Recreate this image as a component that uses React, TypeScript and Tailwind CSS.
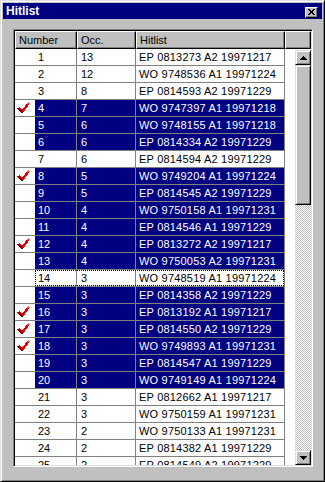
const ROWS: [number, number, string][] = [
  [1, 13, "EP 0813273 A2 19971217"],
  [2, 12, "WO 9748536 A1 19971224"],
  [3, 8, "EP 0814593 A2 19971229"],
  [4, 7, "WO 9747397 A1 19971218"],
  [5, 6, "WO 9748155 A1 19971218"],
  [6, 6, "EP 0814334 A2 19971229"],
  [7, 6, "EP 0814594 A2 19971229"],
  [8, 5, "WO 9749204 A1 19971224"],
  [9, 5, "EP 0814545 A2 19971229"],
  [10, 4, "WO 9750158 A1 19971231"],
  [11, 4, "EP 0814546 A1 19971229"],
  [12, 4, "EP 0813272 A2 19971217"],
  [13, 4, "WO 9750053 A2 19971231"],
  [14, 3, "WO 9748519 A1 19971224"],
  [15, 3, "EP 0814358 A2 19971229"],
  [16, 3, "EP 0813192 A1 19971217"],
  [17, 3, "EP 0814550 A2 19971229"],
  [18, 3, "WO 9749893 A1 19971231"],
  [19, 3, "EP 0814547 A1 19971229"],
  [20, 3, "WO 9749149 A1 19971224"],
  [21, 3, "EP 0812662 A1 19971217"],
  [22, 3, "WO 9750159 A1 19971231"],
  [23, 2, "WO 9750133 A1 19971231"],
  [24, 2, "EP 0814382 A1 19971229"],
  [25, 2, "EP 0814549 A2 19971229"],
];

const SELECTED = new Set([4, 5, 6, 8, 9, 10, 11, 12, 13, 15, 16, 17, 18, 19, 20]);
const CHECKED = new Set([4, 8, 12, 16, 17, 18]);
const FOCUSED = 14;

function Tick() {
  return (
    <svg width="13" height="12" viewBox="0 0 13 12" shapeRendering="crispEdges">
      <polygon points="0,6 3,5 5,8 11,0 13,1 6,11 4,11" fill="#e00000" />
      <polygon points="0,6 2,6 5,10 6,11 4,11" fill="#800000" />
      <polygon points="11,0 13,1 12,2 10,2" fill="#ff6060" />
    </svg>
  );
}

function Arrow({ down }: { down?: boolean }) {
  return (
    <svg width="7" height="4" viewBox="0 0 7 4" shapeRendering="crispEdges">
      <polygon points={down ? "0,0 7,0 3.5,4" : "3.5,0 7,4 0,4"} fill="#000" />
    </svg>
  );
}

function HeaderCell({ label, w }: { label?: string; w: string }) {
  return (
    <div className={`${w} h-full flex items-center pl-[3px] bg-[#c0c0c0] border border-t-white border-l-white border-r-black border-b-black shadow-[inset_-1px_-1px_#808080] text-black`}>
      {label}
    </div>
  );
}

export default function App() {
  return (
    <div className="w-[325px] h-[482px] flex flex-col bg-[#c0c0c0] border border-t-[#dfdfdf] border-l-[#dfdfdf] border-r-black border-b-black shadow-[inset_1px_1px_#fff,inset_-1px_-1px_#808080] p-[2px] font-[Liberation_Sans,Arial,sans-serif] text-[11px] leading-none overflow-hidden">

      {/* title bar */}
      <div className="h-[16px] shrink-0 flex items-center justify-between bg-[#000080] pl-[3px] pr-[4px]">
        <span className="text-white font-bold text-[12px]">Hitlist</span>
        <div className="w-[13px] h-[11px] mt-[2px] flex items-center justify-center bg-[#c0c0c0] border border-t-white border-l-white border-r-black border-b-black shadow-[inset_-1px_-1px_#808080]">
          <svg width="7" height="6" viewBox="0 0 7 6" shapeRendering="crispEdges">
            <path d="M0 0h2l1.5 2L5 0h2L4.5 3L7 6H5L3.5 4L2 6H0l2.5-3z" fill="#000" />
          </svg>
        </div>
      </div>

      {/* body */}
      <div className="flex-1 min-h-0 flex flex-col pt-[10px] pl-[10px] pb-[12px]">
        <div className="w-[300px] flex-1 min-h-0 flex flex-col bg-white border border-t-[#808080] border-l-[#808080] border-r-white border-b-white shadow-[inset_1px_1px_#000,inset_-1px_-1px_#dfdfdf] p-[1px] overflow-hidden">

          {/* header */}
          <div className="h-[18px] shrink-0 flex">
            <HeaderCell w="w-[62px]" label="Number" />
            <HeaderCell w="w-[59px]" label="Occ." />
            <HeaderCell w="w-[149px]" label="Hitlist" />
            <HeaderCell w="flex-1" />
          </div>

          <div className="flex-1 min-h-0 flex">
            {/* rows */}
            <div className="w-[270px] overflow-hidden">
              {ROWS.map(([n, occ, hit]) => {
                const sel = SELECTED.has(n);
                const cell = sel ? "bg-[#000080] text-white" : "text-black";
                return (
                  <div key={n} className="relative h-[17px] flex border-b border-[#808080]">
                    <div className="w-[62px] flex border-r border-[#808080]">
                      <div className="w-[20px] flex items-center pl-[2px]">
                        {CHECKED.has(n) && <Tick />}
                      </div>
                      <div className={`flex-1 flex items-center pl-[3px] ${cell}`}>{n}</div>
                    </div>
                    <div className={`w-[59px] flex items-center pl-[4px] border-r border-[#808080] ${cell}`}>{occ}</div>
                    <div className={`w-[149px] flex items-center pl-[3px] tracking-[0.2px] border-r border-[#808080] ${cell}`}>{hit}</div>
                    {n === FOCUSED && (
                      <span className="absolute left-[20px] right-[1px] top-0 bottom-0 border border-dotted border-black pointer-events-none" />
                    )}
                  </div>
                );
              })}
            </div>

            <div className="flex-1" />

            {/* scrollbar */}
            <div className="w-[16px] mt-[1px] flex flex-col bg-[repeating-conic-gradient(#c0c0c0_0_25%,#fff_0_50%)] bg-[length:2px_2px]">
              <div className="h-[15px] shrink-0 flex items-center justify-center bg-[#c0c0c0] border border-t-[#dfdfdf] border-l-[#dfdfdf] border-r-black border-b-black shadow-[inset_1px_1px_#fff,inset_-1px_-1px_#808080]">
                <Arrow />
              </div>
              <div className="h-[140px] shrink-0 bg-[#c0c0c0] border border-t-[#dfdfdf] border-l-[#dfdfdf] border-r-black border-b-black shadow-[inset_1px_1px_#fff,inset_-1px_-1px_#808080]" />
              <div className="flex-1" />
              <div className="h-[15px] shrink-0 flex items-center justify-center bg-[#c0c0c0] border border-t-[#dfdfdf] border-l-[#dfdfdf] border-r-black border-b-black shadow-[inset_1px_1px_#fff,inset_-1px_-1px_#808080]">
                <Arrow down />
              </div>
            </div>
          </div>
        </div>
      </div>
    </div>
  );
}
